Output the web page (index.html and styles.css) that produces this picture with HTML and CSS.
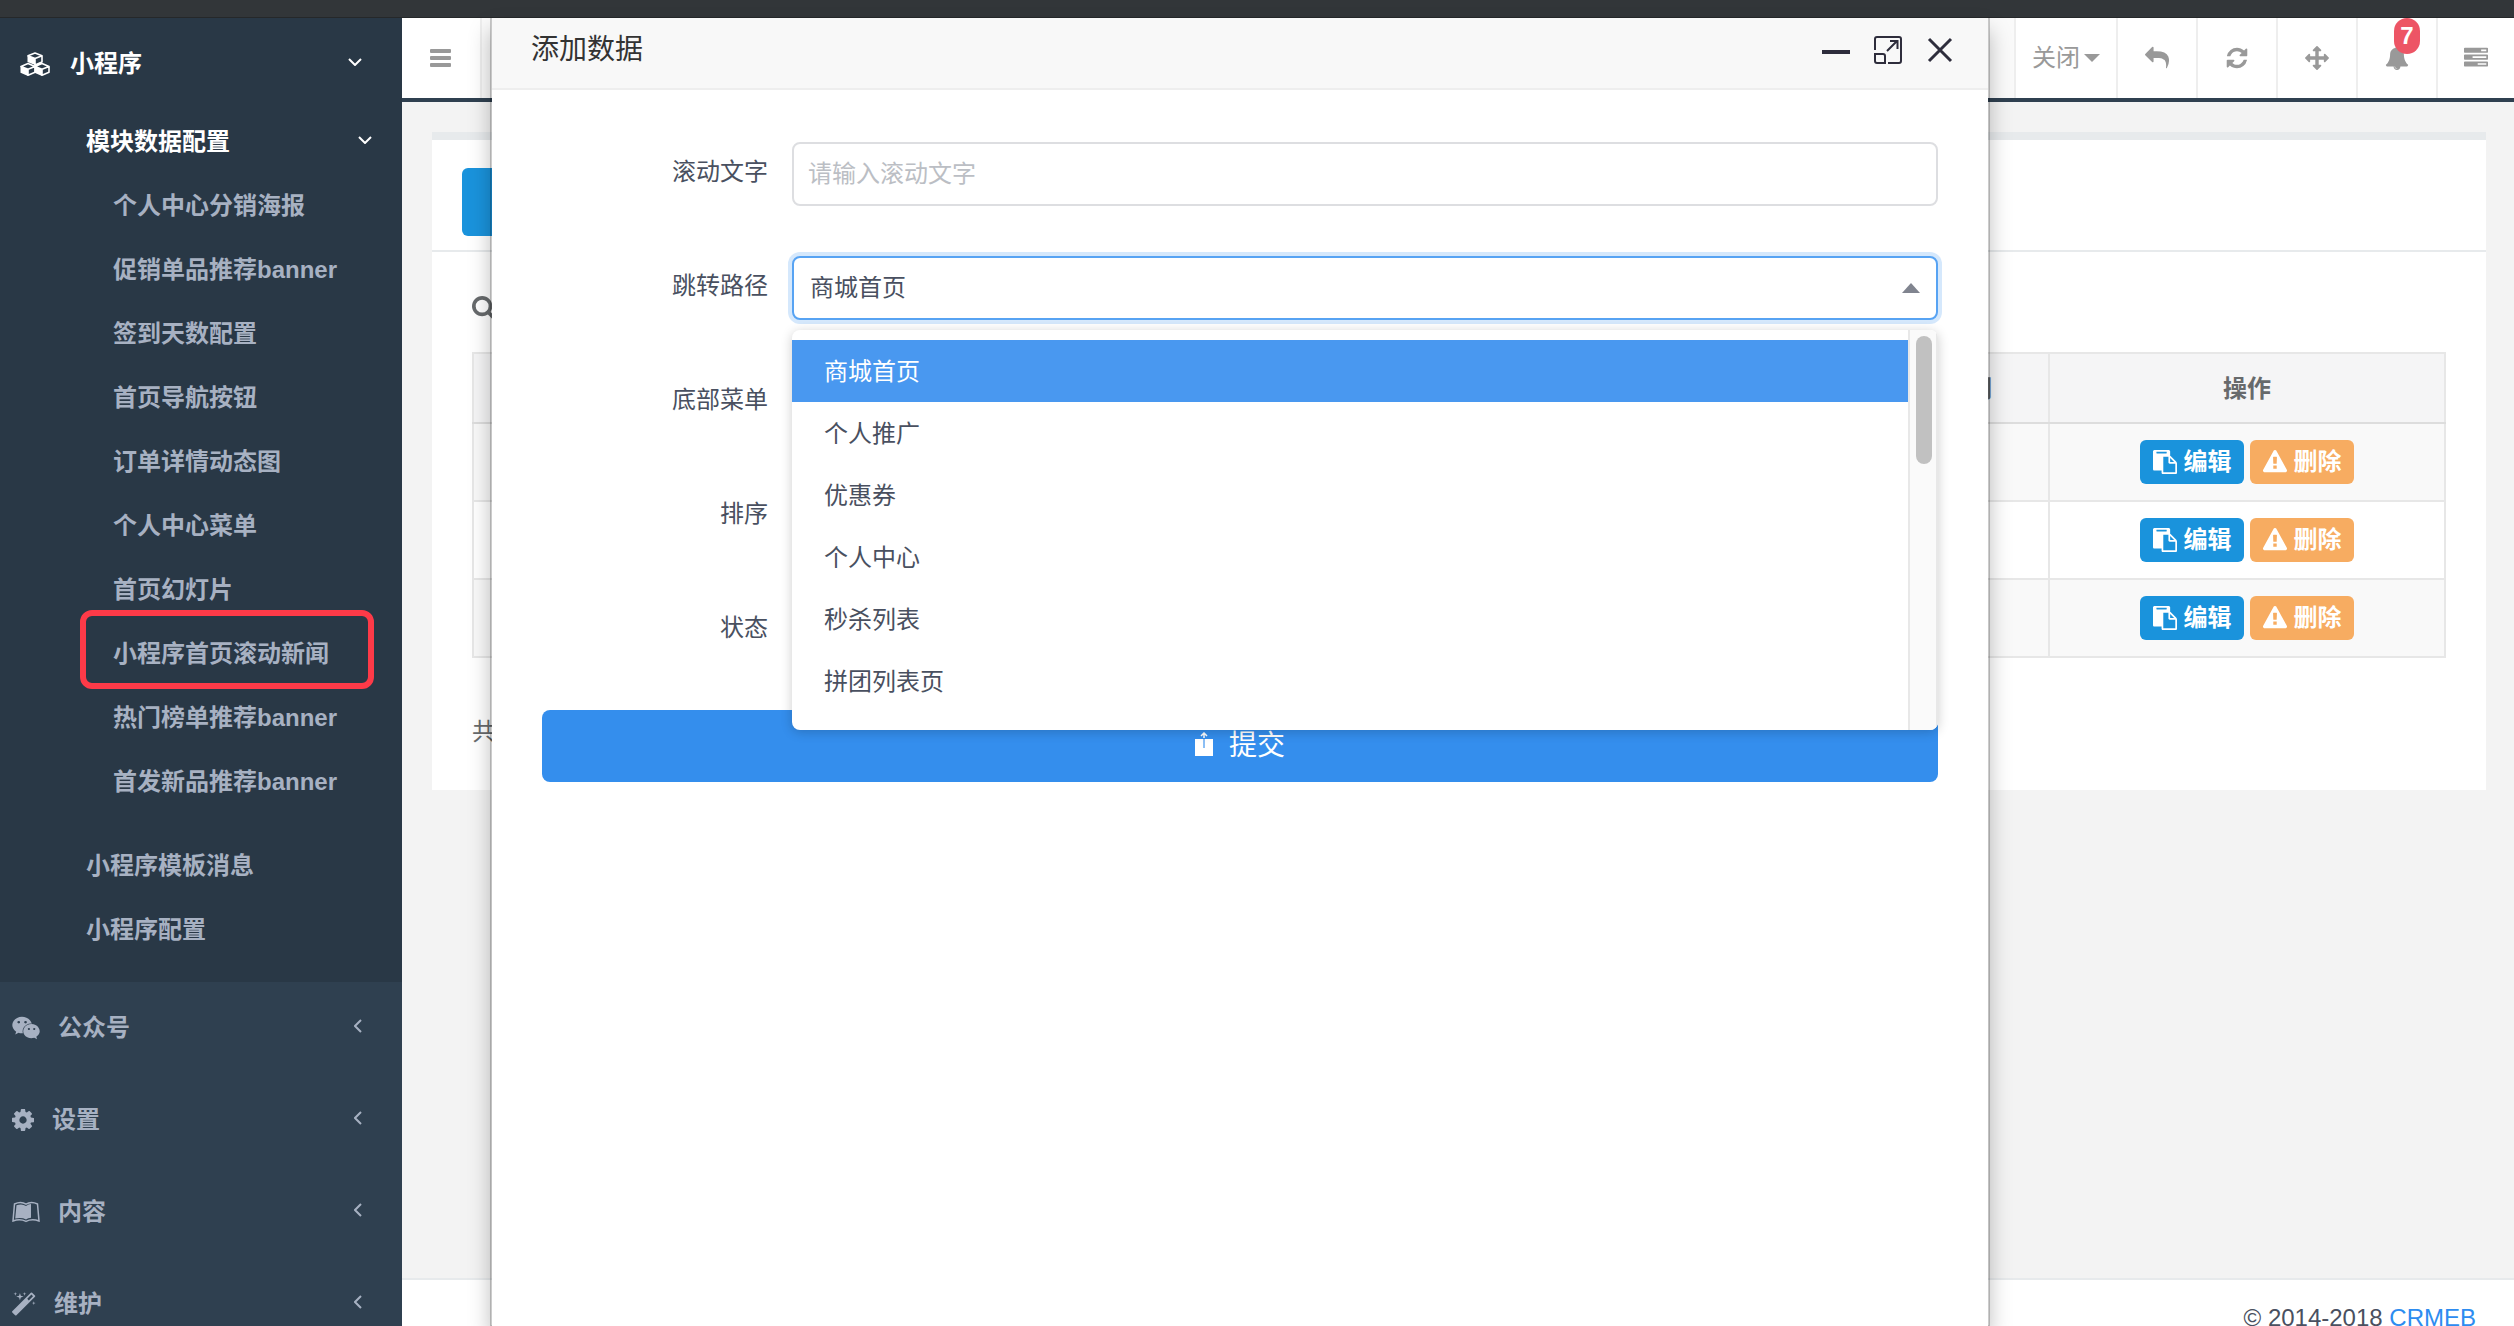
FILE: index.html
```html
<!DOCTYPE html>
<html lang="zh-CN">
<head>
<meta charset="utf-8">
<title>CRMEB</title>
<link rel="stylesheet" href="styles.css">
</head>
<body>
<svg class="sprite" aria-hidden="true">
  <symbol id="i-down" viewBox="0 0 14 8"><path d="M1 1l6 6 6-6" fill="none" stroke="currentColor" stroke-width="2"/></symbol>
  <symbol id="i-left" viewBox="0 0 8 14"><path d="M7 1L1 7l6 6" fill="none" stroke="currentColor" stroke-width="2"/></symbol>
  <symbol id="i-paste" viewBox="0 0 1792 1792"><path d="M768 1664h896v-640h-416q-40 0-68-28t-28-68v-416h-384v1152zm256-1440v-64q0-13-9.5-22.5t-22.5-9.5h-704q-13 0-22.5 9.5t-9.5 22.5v64q0 13 9.5 22.5t22.5 9.5h704q13 0 22.5-9.5t9.5-22.5zm256 672h299l-299-299v299zm512 128v672q0 40-28 68t-68 28h-960q-40 0-68-28t-28-68v-160h-544q-40 0-68-28t-28-68v-1344q0-40 28-68t68-28h1088q40 0 68 28t28 68v328q21 13 36 28l408 408q28 28 48 76t20 88z"/></symbol>
  <symbol id="i-warn" viewBox="0 0 1792 1792"><path d="M1024 1375v-190q0-14-9.500-23.500t-22.500-9.500h-192q-13 0-22.500 9.500t-9.500 23.500v190q0 14 9.500 23.500t22.500 9.500h192q13 0 22.500-9.500t9.500-23.500zm-2-374l18-459q0-12-10-19-13-11-24-11h-220q-11 0-24 11-10 7-10 21l17 457q0 10 10 16.500t24 6.500h185q14 0 23.500-6.500t10.500-16.500zm-14-934l768 1408q35 63-2 126-17 29-46.500 46t-63.500 17h-1536q-34 0-63.500-17t-46.500-46q-37-63-2-126l768-1408q17-31 47-49t65-18 65 18 47 49z"/></symbol>
</svg>
<div class="strip"></div>
<div class="app">
  <nav class="sidebar">
    <section class="group">
      <a class="row top" href="#">
        <svg class="ico-cubes" viewBox="0 0 30 24"><g fill="none" stroke="currentColor" stroke-width="1.6" stroke-linejoin="round"><path d="M8 3.800L15 1l7 2.800-7 2.800zM22 3.800V10l-7 3V6.600M1 14.400l7-2.800 7 2.800-7 2.800zM15 14.400v5.800l-7 3v-6M15 14.400l7-2.800 7 2.800-7 2.800zM29 14.400v5.800l-7 3v-6"/></g><path fill="currentColor" d="M7.500 3.800l7.500 2.800V13l-7.500-3zM.5 14.400L8 17.200V24l-7.500-3.200zM14.500 14.400l7.500 2.800V24l-7.500-3.200z"/></svg>
        <span class="name">小程序</span>
        <svg class="down"><use href="#i-down"/></svg>
      </a>
      <a class="row second open" href="#"><span class="name">模块数据配置</span><svg class="down"><use href="#i-down"/></svg></a>
      <div class="leafs">
        <a class="row leaf" href="#">个人中心分销海报</a>
        <a class="row leaf" href="#">促销单品推荐banner</a>
        <a class="row leaf" href="#">签到天数配置</a>
        <a class="row leaf" href="#">首页导航按钮</a>
        <a class="row leaf" href="#">订单详情动态图</a>
        <a class="row leaf" href="#">个人中心菜单</a>
        <a class="row leaf" href="#">首页幻灯片</a>
        <a class="row leaf marked" href="#">小程序首页滚动新闻</a>
        <a class="row leaf" href="#">热门榜单推荐banner</a>
        <a class="row leaf" href="#">首发新品推荐banner</a>
      </div>
      <a class="row second" href="#">小程序模板消息</a>
      <a class="row second" href="#">小程序配置</a>
    </section>
    <a class="row main" href="#">
      <svg class="ico-wide" viewBox="0 0 2048 1792" fill="currentColor"><path d="M580 461q0-41-25-66t-66-25q-43 0-76 25.500t-33 65.500q0 39 33 64.500t76 25.500q41 0 66-24.500t25-65.500zm743 507q0-28-25.500-50t-65.500-22q-27 0-49.500 22.500t-22.500 49.500q0 28 22.500 50.500t49.500 22.500q40 0 65.500-22t25.500-51zm-236-507q0-41-24.500-66t-65.500-25q-43 0-76 25.500t-33 65.500q0 39 33 64.500t76 25.500q41 0 65.500-24.500t24.500-65.500zm635 507q0-28-26-50t-65-22q-27 0-49.500 22.500t-22.500 49.500q0 28 22.500 50.500t49.500 22.500q39 0 65-22t26-51zm-266-397q-31-4-70-4-169 0-311 77t-223.500 208.500-81.500 287.500q0 78 23 152-35 3-68 3-26 0-50-1.500t-55-6.500-44.500-7-54.500-10.500-50-10.500l-253 127 72-218q-290-203-290-490 0-169 97.500-311t264-223.500 363.500-81.500q176 0 332.500 66t262 182.500 136.500 260.500zm592 561q0 117-68.500 223.500t-185.500 193.500l55 181-199-109q-150 37-218 37-169 0-311-70.500t-223.500-191.500-81.500-264 81.500-264 223.500-191.500 311-70.500q161 0 303 70.500t227.500 192 85.500 263.500z"/></svg>
      <span class="name">公众号</span><svg class="left"><use href="#i-left"/></svg>
    </a>
    <a class="row main" href="#">
      <svg class="ico-narrow" viewBox="128 128 1536 1536" fill="currentColor"><path d="M1152 896q0-106-75-181t-181-75-181 75-75 181 75 181 181 75 181-75 75-181zm512-109v222q0 12-8 23t-20 13l-185 28q-19 54-39 91 35 50 107 138 10 12 10 25t-9 23q-27 37-99 108t-94 71q-12 0-26-9l-138-108q-44 23-91 38-16 136-29 186-7 28-36 28h-222q-14 0-24.500-8.500t-11.500-21.500l-28-184q-49-16-90-37l-141 107q-10 9-25 9-14 0-25-11-126-114-165-168-7-10-7-23 0-12 8-23 15-21 51-66.500t54-70.500q-27-50-41-99l-183-27q-13-2-21-12.500t-8-23.500v-222q0-12 8-23t19-13l186-28q14-46 39-92-40-57-107-138-10-12-10-24 0-10 9-23 26-36 98.500-107.500t94.500-71.500q13 0 26 10l138 107q44-23 91-38 16-136 29-186 7-28 36-28h222q14 0 24.500 8.500t11.500 21.500l28 184q49 16 90 37l142-107q9-9 24-9 13 0 25 10 129 119 165 170 7 8 7 22 0 12-8 23-15 21-51 66.500t-54 70.500q26 50 41 98l183 28q13 2 21 12.500t8 23.500z"/></svg>
      <span class="name">设置</span><svg class="left"><use href="#i-left"/></svg>
    </a>
    <a class="row main" href="#">
      <svg class="ico-wide" viewBox="0 0 28 24"><path d="M2.500 4Q9 1 14 4.200 19 1 25.500 4L27 21q-7-2.500-13 .4Q8 18.500 1 21z" fill="none" stroke="currentColor" stroke-width="1.500"/><path d="M4.500 5.300Q10 3.200 14 6q2.500-2 5-2v13.800q-3 .2-5 1.600-4-2.300-10.800-1z" fill="currentColor"/></svg>
      <span class="name">内容</span><svg class="left"><use href="#i-left"/></svg>
    </a>
    <a class="row main" href="#">
      <svg class="ico-magic" viewBox="90 0 1664 1664" fill="currentColor"><path d="M1254 581l293-293-107-107-293 293zm447-293q0 27-18 45l-1286 1286q-18 18-45 18t-45-18l-198-198q-18-18-18-45t18-45l1286-1286q18-18 45-18t45 18l198 198q18 18 18 45zm-1351-190l98 30-98 30-30 98-30-98-98-30 98-30 30-98zm350 162l196 60-196 60-60 196-60-196-196-60 196-60 60-196zm930 478l98 30-98 30-30 98-30-98-98-30 98-30 30-98zm-640-640l98 30-98 30-30 98-30-98-98-30 98-30 30-98z"/></svg>
      <span class="name">维护</span><svg class="left"><use href="#i-left"/></svg>
    </a>
  </nav>

  <div class="page">
    <header class="topbar">
      <button class="cell menu" type="button" aria-label="菜单"><svg viewBox="0 0 22 18" class="ico-bars" fill="currentColor"><rect width="21" height="4" y="0" rx="1"/><rect width="21" height="4" y="7" rx="1"/><rect width="21" height="4" y="14" rx="1"/></svg></button>
      <div class="tabs"></div>
      <button class="cell close" type="button">关闭<svg class="caret" viewBox="0 0 16 8" fill="currentColor"><path d="M0 0h16L8 8z"/></svg></button>
      <button class="cell" type="button" aria-label="后退"><svg class="ico" viewBox="0 0 1792 1792" fill="currentColor"><path d="M1792 1120q0 166-127 451-3 7-10.500 24t-13.500 30-13 22q-12 17-28 17-15 0-23.500-10t-8.500-25q0-9 2.500-26.500t2.500-23.500q5-68 5-123 0-101-17.500-181t-48.500-138.500-80-101-105.500-69.500-133-42.500-154-21.500-175.500-6h-224v256q0 26-19 45t-45 19-45-19l-512-512q-19-19-19-45t19-45l512-512q19-19 45-19t45 19 19 45v256h224q713 0 875 403 53 134 53 333z"/></svg></button>
      <button class="cell" type="button" aria-label="刷新"><svg class="ico" viewBox="0 0 1792 1792" fill="currentColor"><path d="M1639 1056q0 5-1 7-64 268-268 434.500t-478 166.500q-146 0-282.500-55t-243.500-157l-129 129q-19 19-45 19t-45-19-19-45v-448q0-26 19-45t45-19h448q26 0 45 19t19 45-19 45l-137 137q71 66 161 102t187 36q134 0 250-65t186-179q11-17 53-117 8-23 30-23h192q13 0 22.500 9.500t9.500 22.500zm25-800v448q0 26-19 45t-45 19h-448q-26 0-45-19t-19-45 19-45l138-138q-148-137-349-137-134 0-250 65t-186 179q-11 17-53 117-8 23-30 23h-199q-13 0-22.500-9.500t-9.500-22.500v-7q65-268 270-434.500t480-166.500q146 0 284 55.500t245 156.500l130-129q19-19 45-19t45 19 19 45z"/></svg></button>
      <button class="cell" type="button" aria-label="全屏"><svg class="ico" viewBox="0 0 1792 1792" fill="currentColor"><path d="M1792 896q0 26-19 45l-256 256q-19 19-45 19t-45-19-19-45v-128h-384v384h128q26 0 45 19t19 45-19 45l-256 256q-19 19-45 19t-45-19l-256-256q-19-19-19-45t19-45 45-19h128v-384h-384v128q0 26-19 45t-45 19-45-19l-256-256q-19-19-19-45t19-45l256-256q19-19 45-19t45 19 19 45v128h384v-384h-128q-26 0-45-19t-19-45 19-45l256-256q19-19 45-19t45 19l256 256q19 19 19 45t-19 45-45 19h-128v384h384v-128q0-26 19-45t45-19 45 19l256 256q19 19 19 45z"/></svg></button>
      <button class="cell" type="button" aria-label="通知"><svg class="ico" viewBox="0 0 1792 1792" fill="currentColor"><path d="M912 1696q0-16-16-16-59 0-101.500-42.500t-42.500-101.500q0-16-16-16t-16 16q0 73 51.500 124.500t124.500 51.500q16 0 16-16zm816-288q0 52-38 90t-90 38h-448q0 106-75 181t-181 75-181-75-75-181h-448q-52 0-90-38t-38-90q50-42 91-88t85-119.500 74.500-158.500 50-206 19.500-260q0-152 117-282.500t307-158.500q-8-19-8-39 0-40 28-68t68-28 68 28 28 68q0 20-8 39 190 28 307 158.500t117 282.500q0 139 19.500 260t50 206 74.500 158.500 85 119.500 91 88z"/></svg><span class="badge">7</span></button>
      <button class="cell last" type="button" aria-label="任务"><svg class="ico" viewBox="0 0 1792 1792" fill="currentColor"><path d="M1024 1408h640v-128h-640v128zm-384-512h1024v-128h-1024v128zm640-512h384v-128h-384v128zm512 832v256q0 26-19 45t-45 19h-1664q-26 0-45-19t-19-45v-256q0-26 19-45t45-19h1664q26 0 45 19t19 45zm0-512v256q0 26-19 45t-45 19h-1664q-26 0-45-19t-19-45v-256q0-26 19-45t45-19h1664q26 0 45 19t19 45zm0-512v256q0 26-19 45t-45 19h-1664q-26 0-45-19t-19-45v-256q0-26 19-45t45-19h1664q26 0 45 19t19 45z"/></svg></button>
    </header>

    <main class="content">
      <div class="panel">
        <div class="panel-head"><button class="add" type="button" aria-label="添加数据"></button></div>
        <div class="panel-body">
          <svg class="search" viewBox="64 128 1664 1664" fill="currentColor"><path d="M1216 832q0-185-131.500-316.500t-316.500-131.500-316.500 131.500-131.500 316.500 131.500 316.500 316.500 131.500 316.500-131.500 131.500-316.500zm512 832q0 52-38 90t-90 38q-54 0-90-38l-343-342q-179 124-399 124-143 0-273.500-55.500t-225-150-150-225-55.500-273.500 55.500-273.500 150-225 225-150 273.500-55.500 273.500 55.500 225 150 150 225 55.500 273.500q0 220-124 399l343 343q37 37 37 90z"/></svg>
          <table class="grid">
            <colgroup><col><col class="c-time"><col class="c-act"></colgroup>
            <thead><tr><th></th><th>添加时间</th><th>操作</th></tr></thead>
            <tbody>
              <tr><td></td><td></td><td><div class="acts"><button class="btn edit" type="button"><svg><use href="#i-paste"/></svg>编辑</button><button class="btn del" type="button"><svg><use href="#i-warn"/></svg>删除</button></div></td></tr>
              <tr><td></td><td></td><td><div class="acts"><button class="btn edit" type="button"><svg><use href="#i-paste"/></svg>编辑</button><button class="btn del" type="button"><svg><use href="#i-warn"/></svg>删除</button></div></td></tr>
              <tr><td></td><td></td><td><div class="acts"><button class="btn edit" type="button"><svg><use href="#i-paste"/></svg>编辑</button><button class="btn del" type="button"><svg><use href="#i-warn"/></svg>删除</button></div></td></tr>
            </tbody>
          </table>
          <p class="total">共</p>
        </div>
      </div>
    </main>
    <footer class="footer">© 2014-2018 <a href="#">CRMEB</a></footer>
  </div>
</div>

<div class="dialog" role="dialog" aria-labelledby="dlg-title">
  <div class="dialog-head">
    <h1 id="dlg-title">添加数据</h1>
    <button type="button" aria-label="最小化"><svg viewBox="0 0 28 28"><path d="M0 16h28" fill="none" stroke="currentColor" stroke-width="4"/></svg></button>
    <button type="button" aria-label="最大化"><svg viewBox="0 0 28 28" fill="none" stroke="currentColor" stroke-width="2"><path d="M1 14V3q0-2 2-2h22q2 0 2 2v22q0 2-2 2H14M1 18h8q2 0 2 2v7H3q-2 0-2-2zM13 15L23 5M16 5h7.500v8"/></svg></button>
    <button type="button" aria-label="关闭"><svg viewBox="0 0 28 28"><path d="M3 3l22 22M25 3L3 25" fill="none" stroke="currentColor" stroke-width="3"/></svg></button>
  </div>
  <form class="form">
    <div class="fields">
      <div class="field"><label for="f-text">滚动文字</label><input id="f-text" type="text" placeholder="请输入滚动文字"></div>
      <div class="field">
        <label for="f-path">跳转路径</label>
        <div class="picker">
          <select id="f-path"><option>商城首页</option></select>
          <svg class="up" viewBox="0 0 18 10"><path d="M0 10L9 0l9 10z" fill="currentColor"/></svg>
          <div class="menu-list">
            <ul role="listbox" aria-label="跳转路径">
              <li role="option" aria-selected="true">商城首页</li>
              <li role="option">个人推广</li>
              <li role="option">优惠券</li>
              <li role="option">个人中心</li>
              <li role="option">秒杀列表</li>
              <li role="option">拼团列表页</li>
            </ul>
            <div class="track"><div class="thumb"></div></div>
          </div>
        </div>
      </div>
      <div class="field"><label for="f-menu">底部菜单</label><input id="f-menu" type="text"></div>
      <div class="field"><label for="f-sort">排序</label><input id="f-sort" type="text"></div>
      <div class="field"><label for="f-state">状态</label><input id="f-state" type="text"></div>
    </div>
    <button class="submit" type="submit"><svg viewBox="0 0 18 28"><path d="M0 7h18v17H0z" fill="#fff"/><path d="M9 6V1M6 4l3-3 3 3" fill="none" stroke="#fff" stroke-width="1.500"/><path d="M9 7v9" stroke="#8cbff5" stroke-width="2"/></svg>提交</button>
  </form>
</div>
</body>
</html>
```
FILE: styles.css
```css
*, *::after { box-sizing: border-box; }

body {
  margin: 0;
  height: 100vh;
  overflow: hidden;
  display: flex;
  flex-direction: column;
  font: 24px/24px "Liberation Sans", "Noto Sans CJK SC", sans-serif;
  color: #676a6c;
  background: #f3f3f3;
}

a { color: inherit; text-decoration: none; }
button, input, select { font: inherit; color: inherit; margin: 0; padding: 0; border: 0; background: none; }
svg { flex: none; display: block; }
.sprite { position: absolute; width: 0; height: 0; }

.strip { flex: none; height: 18px; background: #323639; border-bottom: 1px solid #25282a; }
.app { flex: 1; min-height: 0; display: flex; overflow: hidden; }

/* sidebar */
.sidebar { flex: none; width: 402px; overflow: hidden; background: #2f4050; color: #a7b1c2; font-weight: 600; }
.group { background: #293846; padding-bottom: 20px; }
.row { display: flex; align-items: center; height: 64px; }
.row .name { flex: 1; }
.row.top { height: 92px; padding: 0 40px 0 20px; gap: 20px; color: #fff; }
.row.second { padding: 0 30px 0 86px; }
.row.open { color: #fff; }
.leafs { padding-bottom: 20px; }
.row.leaf { padding-left: 113px; }
.row.main { height: 92px; padding: 0 40px 0 12px; gap: 18px; }
.marked { position: relative; }
.marked::after {
  content: "";
  position: absolute;
  left: 80px;
  top: -12px;
  width: 294px;
  height: 79px;
  border: 6px solid #fd3a48;
  border-radius: 12px;
}
.down { width: 14px; height: 8px; margin-bottom: 4px; }
.left { width: 8px; height: 14px; margin-bottom: 4px; }
.ico-cubes { width: 30px; height: 24px; }
.ico-wide { width: 28px; height: 24px; }
.ico-narrow { width: 22px; height: 22px; }
.ico-magic { width: 24px; height: 24px; }

/* top bar */
.page { flex: 1; min-width: 0; display: flex; flex-direction: column; }
.topbar { flex: none; display: flex; height: 84px; background: #fff; border-bottom: 4px solid #2f4050; color: #999; }
.cell { position: relative; flex: none; width: 80px; display: flex; align-items: center; justify-content: center; border-left: 2px solid #eee; }
.cell.menu { border-left: 0; border-right: 2px solid #eee; }
.cell.close { width: 102px; gap: 4px; }
.cell.last { width: 78px; }
.tabs { flex: 1; background: #fafafa; }
.ico { width: 24px; height: 24px; }
.ico-bars { width: 22px; height: 18px; }
.caret { width: 16px; height: 8px; }
.badge {
  position: absolute;
  top: 0;
  right: 16px;
  width: 26px;
  height: 36px;
  border-radius: 13px;
  background: #ed5565;
  color: #fff;
  font-weight: 700;
  line-height: 36px;
  text-align: center;
}

/* content */
.content { flex: 1; padding: 30px 28px 0 30px; }
.panel { background: #fff; border-top: 8px solid #e7eaec; }
.panel-head { padding: 28px 30px 14px; border-bottom: 2px solid #e7eaec; }
.add { display: block; width: 160px; height: 68px; border-radius: 6px; background: #1a93dc; }
.panel-body { padding: 44px 40px 46px; }
.search { width: 24px; height: 24px; margin-bottom: 32px; }
.grid { width: 100%; border-collapse: collapse; table-layout: fixed; border: 2px solid #e7e7e7; }
.c-time { width: 210px; }
.c-act { width: 396px; }
.grid th { height: 70px; padding: 2px 0 0; background: #f5f5f6; border: 2px solid #e7e7e7; border-bottom-color: #ddd; font-weight: 700; }
.grid td { height: 78px; padding: 0; border: 2px solid #e7e7e7; }
.grid tbody tr:nth-child(odd) { background: #f9f9f9; }
.acts { display: flex; justify-content: center; gap: 6px; }
.btn { display: flex; align-items: center; justify-content: center; gap: 7px; width: 104px; height: 44px; border-radius: 6px; color: #fff; font-weight: 600; }
.btn svg { width: 24px; height: 24px; fill: currentColor; }
.edit { background: #1a93dc; }
.del { background: #f7ac61; }
.total { margin: 62px 0 0; }

.footer { flex: none; padding: 26px 38px 0 0; height: 48px; border-top: 2px solid #e7eaec; background: #fff; color: #495060; text-align: right; }
.footer a { color: #2d8cf0; }

/* dialog */
.dialog {
  position: absolute;
  left: 490px;
  right: 524px;
  top: 18px;
  bottom: 0;
  border: solid rgba(0, 0, 0, .2);
  border-width: 0 2px;
  background: #fff padding-box;
  box-shadow: 0 12px 20px rgba(0, 0, 0, .25);
}
.dialog-head { display: flex; gap: 24px; align-items: flex-start; height: 72px; padding: 18px 34px 0 39px; background: #f8f8f8; border-bottom: 2px solid #eee; color: #2e2d3c; }
.dialog-head h1 { flex: 1; margin: 0; font-size: 28px; line-height: 28px; font-weight: 400; color: #333; }
.dialog-head svg { width: 28px; height: 28px; }

.form { display: flex; flex-direction: column; gap: 48px; padding: 52px 50px; color: #495060; }
.fields { display: flex; flex-direction: column; gap: 50px; }
.field { display: flex; height: 64px; }
.field label { width: 250px; padding-right: 24px; line-height: 60px; text-align: right; }
.field input, .field select {
  flex: 1;
  width: 100%;
  height: 64px;
  padding: 0 14px;
  border: 2px solid #dddee1;
  border-radius: 8px;
  background: #fff;
}
.field input::placeholder { color: #bbbec4; opacity: 1; }
.picker { flex: 1; position: relative; }
.field select { appearance: none; padding: 0 16px; border-color: #57a3f3; box-shadow: 0 0 0 4px rgba(45, 140, 240, .2); }
.up { position: absolute; right: 18px; top: 27px; width: 18px; height: 10px; color: #80848f; }
.menu-list {
  position: absolute;
  z-index: 2;
  left: 0;
  right: 0;
  top: 74px;
  height: 400px;
  display: flex;
  overflow: hidden;
  border-radius: 8px;
  background: #fff;
  box-shadow: 0 2px 12px rgba(0, 0, 0, .2);
}
.menu-list ul { flex: 1; margin: 0; padding: 10px 0; list-style: none; }
.menu-list li { padding: 2px 32px 0; line-height: 60px; }
.menu-list li[aria-selected] { background: #4998f0; color: #fff; }
.track { width: 30px; padding: 6px; border: solid #e8e8e8; border-width: 0 2px; background: #fafafa; }
.thumb { width: 16px; height: 128px; border-radius: 8px; background: #c1c1c1; }

.submit { display: flex; align-items: center; justify-content: center; gap: 16px; height: 72px; border-radius: 8px; background: #348eed; color: #fff; font-size: 28px; line-height: 28px; }
.submit svg { width: 18px; height: 28px; }
```
